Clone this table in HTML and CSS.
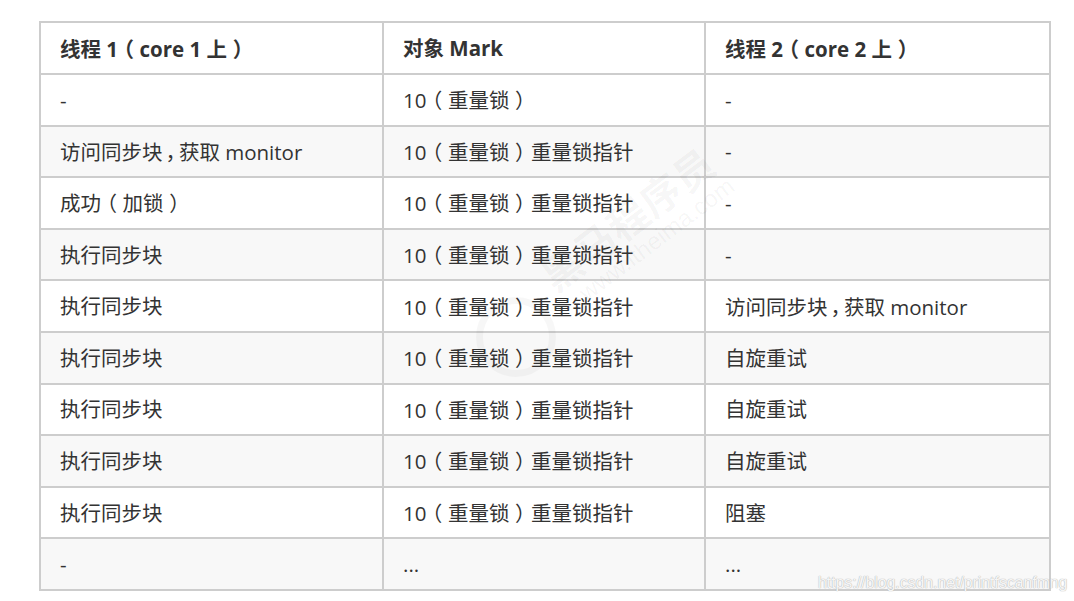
FILE: index.html
```html
<!DOCTYPE html>
<html lang="zh-CN">
<head>
<meta charset="utf-8">
<title>锁膨胀</title>
<link rel="stylesheet" href="styles.css">
</head>
<body>
<div class="page">
  <table class="lock-table">
    <colgroup>
      <col class="c1"><col class="c2"><col class="c3">
    </colgroup>
    <thead>
      <tr>
        <th>线程 1<span class="fw">（</span>core 1 上<span class="fw">）</span></th>
        <th>对象 Mark</th>
        <th>线程 2<span class="fw">（</span>core 2 上<span class="fw">）</span></th>
      </tr>
    </thead>
    <tbody>
      <tr><td>-</td><td>10<span class="fw">（</span>重量锁<span class="fw">）</span></td><td>-</td></tr>
      <tr><td>访问同步块<span class="cm">，</span>获取 monitor</td><td>10<span class="fw">（</span>重量锁<span class="fw">）</span>重量锁指针</td><td>-</td></tr>
      <tr><td>成功<span class="fw">（</span>加锁<span class="fw">）</span></td><td>10<span class="fw">（</span>重量锁<span class="fw">）</span>重量锁指针</td><td>-</td></tr>
      <tr><td>执行同步块</td><td>10<span class="fw">（</span>重量锁<span class="fw">）</span>重量锁指针</td><td>-</td></tr>
      <tr><td>执行同步块</td><td>10<span class="fw">（</span>重量锁<span class="fw">）</span>重量锁指针</td><td>访问同步块<span class="cm">，</span>获取 monitor</td></tr>
      <tr><td>执行同步块</td><td>10<span class="fw">（</span>重量锁<span class="fw">）</span>重量锁指针</td><td>自旋重试</td></tr>
      <tr><td>执行同步块</td><td>10<span class="fw">（</span>重量锁<span class="fw">）</span>重量锁指针</td><td>自旋重试</td></tr>
      <tr><td>执行同步块</td><td>10<span class="fw">（</span>重量锁<span class="fw">）</span>重量锁指针</td><td>自旋重试</td></tr>
      <tr><td>执行同步块</td><td>10<span class="fw">（</span>重量锁<span class="fw">）</span>重量锁指针</td><td>阻塞</td></tr>
      <tr><td>-</td><td>...</td><td>...</td></tr>
    </tbody>
  </table>
  <div class="wm-logo"></div>
  <div class="wm-brand"><span class="wm-cn">黑马程序员</span><span class="wm-en">www.itheima.com</span></div>
  <div class="wm-url">https://blog.csdn.net/printfscanfmng</div>
</div>
</body>
</html>
```

FILE: styles.css
```css
html, body {
  margin: 0;
  padding: 0;
  background: #fff;
}
.page {
  position: relative;
  width: 1074px;
  height: 601px;
  overflow: hidden;
  padding: 21px 0 0 39px;
  box-sizing: border-box;
}
.lock-table {
  border-collapse: collapse;
  table-layout: fixed;
  width: 1010px;
  font-family: "Open Sans", "Noto Sans CJK SC", sans-serif;
  font-size: 20.5px;
  color: #333;
}
.c1 { width: 343px; }
.c2 { width: 322px; }
.c3 { width: 345px; }
.lock-table th,
.lock-table td {
  border: 2px solid #cdcdcd;
  padding: 0 19px;
  height: 51.6px;
  box-sizing: border-box;
  text-align: left;
  white-space: nowrap;
  line-height: 26px;
}
.lock-table th {
  font-weight: 700;
  height: 52px;
}
.lock-table tbody tr:nth-child(even) td {
  background: #f8f8f8;
}
.fw {
  display: inline-block;
  width: 1.05em;
  text-align: center;
  font-family: "Noto Sans CJK SC", sans-serif;
  font-weight: 400;
  font-feature-settings: "halt" 1;
}
.lock-table th .fw {
  font-weight: 700;
}
.cm {
  display: inline-block;
  width: 0.8em;
  text-align: center;
  font-family: "Noto Sans CJK SC", sans-serif;
  font-feature-settings: "halt" 1;
}
.wm-logo {
  position: absolute;
  left: 476px;
  top: 297px;
  width: 66px;
  height: 66px;
  border: 7px solid rgba(0, 0, 0, 0.03);
  border-radius: 50%;
  pointer-events: none;
}
.wm-brand {
  position: absolute;
  left: 532px;
  top: 262px;
  transform: rotate(-37deg);
  transform-origin: left top;
  display: flex;
  flex-direction: column;
  line-height: 1.1;
  color: rgba(0, 0, 0, 0.045);
  font-family: "Noto Sans CJK SC", sans-serif;
  pointer-events: none;
}
.wm-cn {
  font-size: 40px;
  font-weight: 700;
  letter-spacing: 1px;
}
.wm-en {
  font-size: 24px;
  font-family: "Liberation Sans", sans-serif;
  padding-left: 20px;
}
.wm-url {
  position: absolute;
  left: 818px;
  top: 574px;
  font-family: "Liberation Sans", Arial, sans-serif;
  font-size: 15.8px;
  color: rgba(255, 255, 255, 0.9);
  text-shadow: 0 0 1px #b5b5b5, 0 0 1px #b5b5b5;
  pointer-events: none;
}
```
